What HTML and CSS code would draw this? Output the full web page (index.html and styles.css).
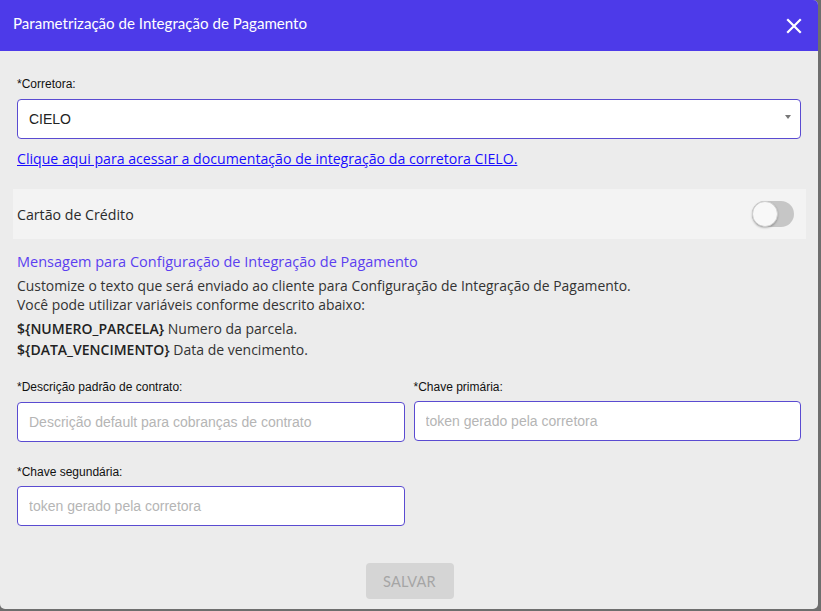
FILE: index.html
```html
<!DOCTYPE html>
<html lang="pt">
<head>
<meta charset="utf-8">
<title>Parametrização</title>
<link rel="stylesheet" href="styles.css">
</head>
<body>
<div class="dialog">
  <header class="head">
    <h1 class="title">Parametrização de Integração de Pagamento</h1>
    <button class="close" aria-label="Fechar">
      <svg width="16" height="16" viewBox="0 0 16 16"><path d="M2 2 L14 14 M14 2 L2 14" stroke="#fff" stroke-width="2.2" stroke-linecap="square"/></svg>
    </button>
  </header>
  <main class="body">
    <div class="field">
      <label class="lbl">*Corretora:</label>
      <div class="select">
        <span>CIELO</span>
        <span class="caret"></span>
      </div>
    </div>
    <a class="doc" href="#">Clique aqui para acessar a documentação de integração da corretora CIELO.</a>
    <div class="card-row">
      <span>Cartão de Crédito</span>
      <span class="toggle"><span class="knob"></span></span>
    </div>
    <h2 class="msg-title">Mensagem para Configuração de Integração de Pagamento</h2>
    <p class="desc">Customize o texto que será enviado ao cliente para Configuração de Integração de Pagamento.<br>Você pode utilizar variáveis conforme descrito abaixo:</p>
    <p class="vars"><b>${NUMERO_PARCELA}</b> Numero da parcela.<br><b>${DATA_VENCIMENTO}</b> Data de vencimento.</p>
    <div class="grid">
      <div class="field">
        <label class="lbl">*Descrição padrão de contrato:</label>
        <input class="inp" placeholder="Descrição default para cobranças de contrato">
      </div>
      <div class="field">
        <label class="lbl">*Chave primária:</label>
        <input class="inp" placeholder="token gerado pela corretora">
      </div>
      <div class="field">
        <label class="lbl">*Chave segundária:</label>
        <input class="inp" placeholder="token gerado pela corretora">
      </div>
    </div>
    <div class="actions">
      <button class="save" disabled>SALVAR</button>
    </div>
  </main>
</div>
</body>
</html>
```
FILE: styles.css
```css
html, body { margin: 0; padding: 0; }
body {
  background: #6e6e6e;
  width: 821px;
  height: 611px;
  overflow: hidden;
  font-family: "Open Sans", "Lato", sans-serif;
}
.dialog {
  width: 818px;
  height: 609px;
  background: #ececec;
  border-radius: 0 5px 5px 5px;
  overflow: hidden;
  display: flex;
  flex-direction: column;
}
.head {
  height: 51px;
  background: #4d3ae9;
  display: flex;
  align-items: center;
  justify-content: space-between;
  padding: 0 15px 0 13px;
  box-sizing: border-box;
  flex: none;
}
.title {
  margin: 0 0 6px 0;
  font-family: "Lato", sans-serif;
  font-size: 15.1px;
  font-weight: 400;
  color: #fff;
}
.close {
  background: none;
  border: 0;
  padding: 0;
  width: 18px;
  height: 18px;
  display: flex;
  align-items: center;
  justify-content: center;
}
.body {
  padding: 25px 17px 0 17px;
  box-sizing: border-box;
  flex: 1;
  display: flex;
  flex-direction: column;
}
.field { display: flex; flex-direction: column; }
.lbl {
  font-family: "Liberation Sans", Arial, sans-serif;
  font-size: 12px;
  color: #111;
  height: 16px;
  line-height: 16px;
  margin-bottom: 6px;
}
.field:first-child > .lbl { margin-bottom: 7px; }
.select {
  height: 40px;
  box-sizing: border-box;
  background: #fff;
  border: 1px solid #5a4bd1;
  border-radius: 4px;
  display: flex;
  align-items: center;
  justify-content: space-between;
  padding: 0 9px 0 11px;
  font-family: "Liberation Sans", Arial, sans-serif;
  font-size: 14px;
  color: #222;
}
.caret {
  width: 0; height: 0;
  border-left: 3.5px solid transparent;
  border-right: 3.5px solid transparent;
  border-top: 4px solid #777;
  margin-top: -4px;
}
.doc {
  margin-top: 11px;
  font-size: 14.15px;
  color: #1a0dff;
  text-decoration: underline;
  line-height: 18px;
  align-self: flex-start;
}
.card-row {
  margin: 21px -5px 0 -4px;
  height: 50px;
  background: #f3f3f3;
  display: flex;
  align-items: center;
  justify-content: space-between;
  padding: 0 12px 0 4px;
  font-size: 14.2px;
  color: #2a2a2a;
}
.toggle {
  width: 42px;
  height: 26px;
  border-radius: 13px;
  background: #c6c6c6;
  position: relative;
  display: block;
}
.knob {
  position: absolute;
  left: 0; top: 0;
  width: 26px; height: 26px;
  box-sizing: border-box;
  border-radius: 50%;
  background: #f8f8f8;
  border: 1px solid #d0d0d0;
  box-shadow: 0 1px 2px rgba(0,0,0,0.25);
}
.msg-title {
  margin: 13px 0 0 0;
  font-size: 14.5px;
  font-weight: 400;
  color: #5b3ff0;
  line-height: 19px;
}
.desc {
  margin: 5px 0 0 0;
  font-size: 13.9px;
  line-height: 19px;
  color: #333;
}
.vars {
  margin: 4px 0 0 0;
  font-size: 14px;
  line-height: 21px;
  color: #333;
}
.vars b { font-weight: 600; color: #222; }
.grid {
  margin-top: 19px;
  display: grid;
  grid-template-columns: 1fr 1fr;
  column-gap: 9px;
  row-gap: 22px;
}
.inp {
  height: 40px;
  box-sizing: border-box;
  border: 1px solid #5a4bd1;
  border-radius: 4px;
  background: #fff;
  padding: 0 11px;
  font-family: "Liberation Sans", Arial, sans-serif;
  font-size: 14px;
  outline: none;
}
.inp::placeholder { color: #b5b5b5; }
.actions {
  margin-top: 37px;
  display: flex;
  justify-content: center;
  padding-left: 1px;
}
.save {
  width: 88px;
  height: 36px;
  border: 0;
  border-radius: 4px;
  background: #d5d5d5;
  color: #a5a5a5;
  font-family: "Lato", sans-serif;
  font-size: 14.5px;
  letter-spacing: 0.2px;
}
```
